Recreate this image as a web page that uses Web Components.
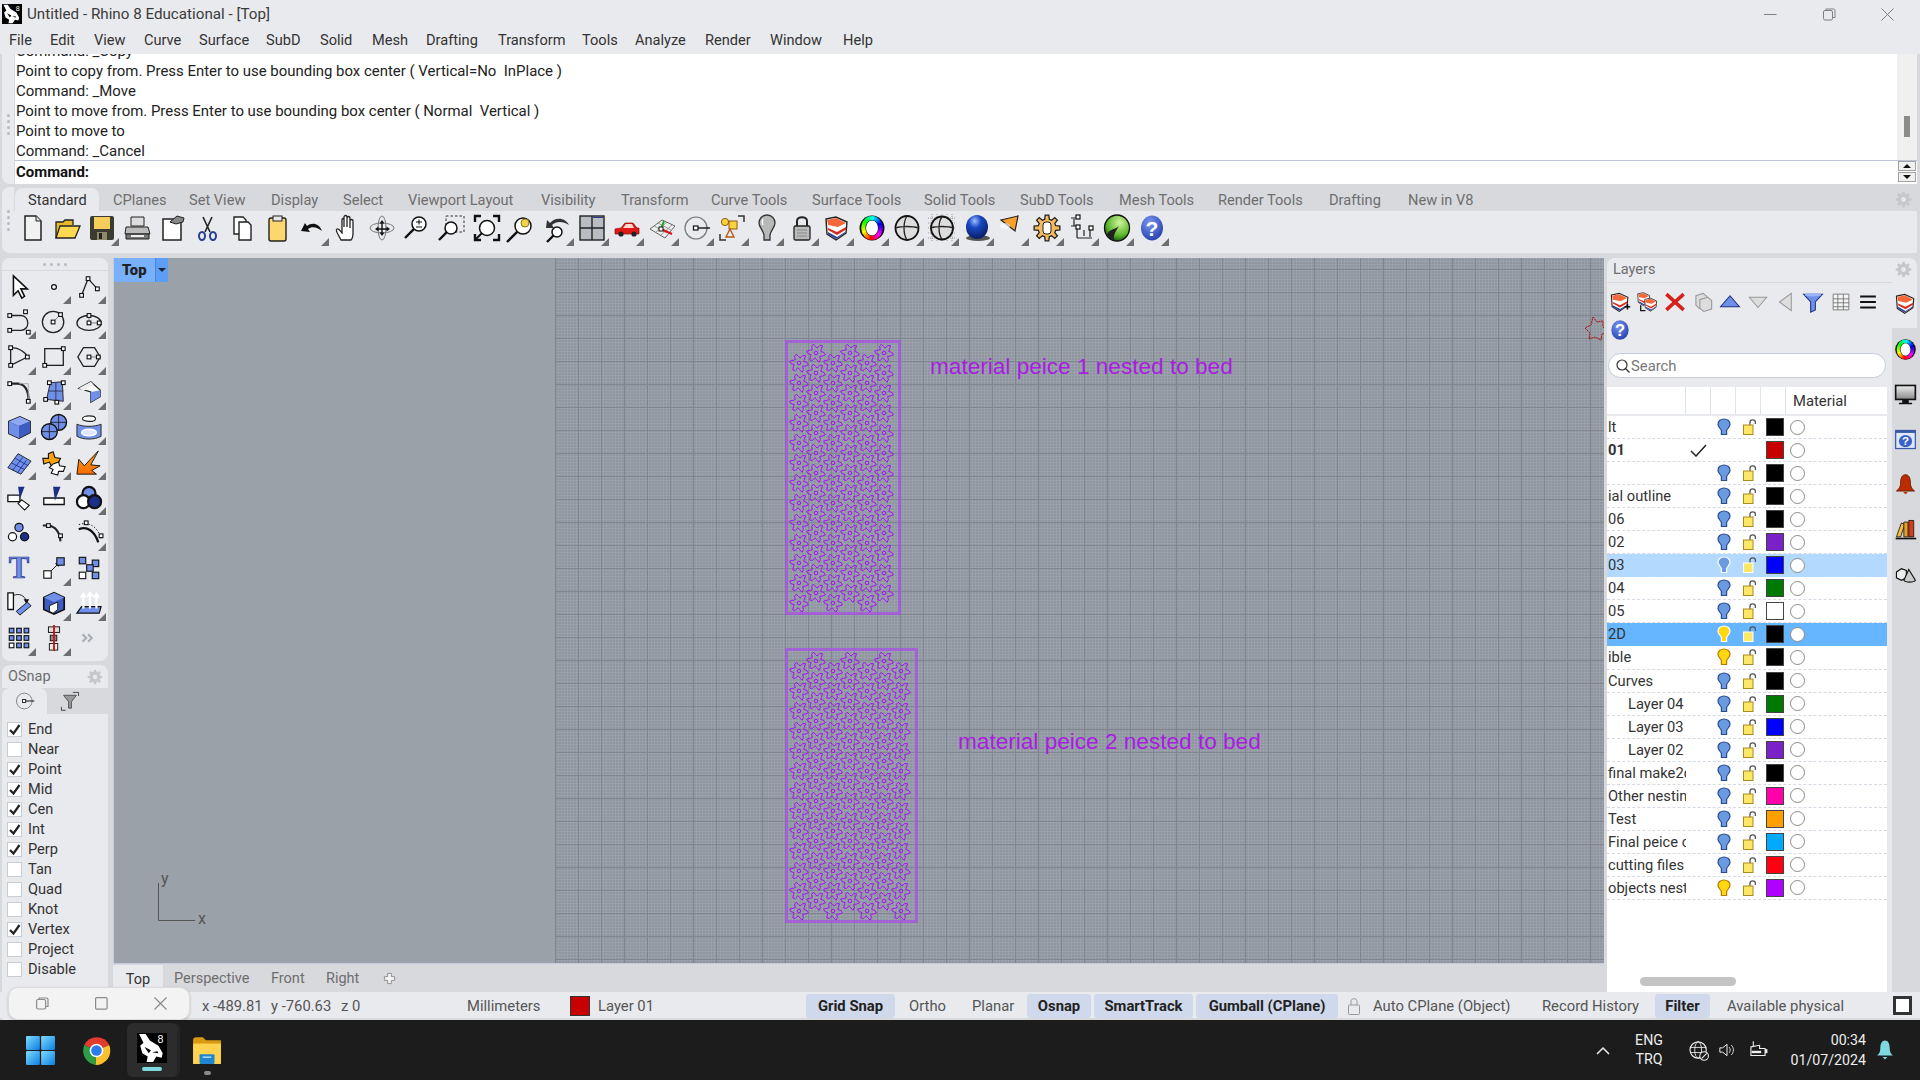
<!DOCTYPE html>
<html>
<head>
<meta charset="utf-8">
<title>Rhino 8</title>
<style>
  html, body { margin: 0; padding: 0; width: 1920px; height: 1080px; overflow: hidden; background: #d8d9dd; }
  body { font-family: Roboto, "Liberation Sans", sans-serif; font-size: 14.5px; color: #333; }
</style>
</head>
<body>
<rh-app>
  <rh-titlebar slot="top">Untitled - Rhino 8 Educational - [Top]</rh-titlebar>
  <rh-menubar slot="top"></rh-menubar>
  <rh-command slot="top"></rh-command>
  <rh-toolbar slot="top"></rh-toolbar>
  <rh-leftcol slot="left"></rh-leftcol>
  <rh-viewport slot="center"></rh-viewport>
  <rh-layers slot="right"></rh-layers>
  <rh-statusbar slot="bottom"></rh-statusbar>
  <rh-taskbar slot="bottom"></rh-taskbar>
  <rh-snappopup slot="overlay"></rh-snappopup>
</rh-app>

<script>
// little svg helpers ---------------------------------------------------------
function gearPath(cx, cy, R, r, n) {
  let d = '';
  for (let i = 0; i < n; i++) {
    const a = i * 2 * Math.PI / n, w = Math.PI / n * 0.5;
    const pts = [[r, a - w * 1.3], [R, a - w * 0.7], [R, a + w * 0.7], [r, a + w * 1.3]];
    pts.forEach(([rad, t], j) => {
      d += ((i === 0 && j === 0) ? 'M' : 'L') + (cx + rad * Math.cos(t)).toFixed(1) + ' ' + (cy + rad * Math.sin(t)).toFixed(1);
    });
  }
  return d + 'Z';
}
function wheel() {
  let s = '<circle cx="14" cy="14" r="12.5" fill="#111"/>';
  for (let i = 0; i < 24; i++) {
    const a = i * 15 * Math.PI / 180, b = (i + 1.2) * 15 * Math.PI / 180;
    const p = t => (14 + 8.6 * Math.cos(t)).toFixed(2) + ' ' + (14 + 10 * Math.sin(t)).toFixed(2);
    s += `<path d="M${p(a)}A8.6 10 0 0 1 ${p(b)}" fill="none" stroke="hsl(${i * 15 - 90},100%,50%)" stroke-width="4"/>`;
  }
  return s + '<ellipse cx="14" cy="14" rx="6" ry="7.6" fill="#fff"/>';
}
const glass = (x, y, r = 5.5) => `<circle cx="${x}" cy="${y}" r="${r}" fill="#fff" stroke="#111" stroke-width="1.5"/><path d="M${x - r * 0.7} ${y + r * 0.7}L${x - r * 2} ${y + r * 2}" stroke="#111" stroke-width="2.4"/>`;
const sq = (x, y, s = 4, f = '#fff') => `<rect x="${x - s / 2}" y="${y - s / 2}" width="${s}" height="${s}" fill="${f}" stroke="#111" stroke-width="1.2"/>`;
const ln = 'fill="none" stroke="#222" stroke-width="1.4"';
const bl = '#6f8fe8', dk = '#1c2f86';
const help = '<defs><radialGradient id="h" cx=".4" cy=".3" r=".8"><stop offset="0" stop-color="#7b95f0"/><stop offset="1" stop-color="#1d3ba8"/></radialGradient></defs><ellipse cx="14" cy="14" rx="11" ry="12.5" fill="url(#h)"/><text x="14" y="22" text-anchor="middle" font-family="Liberation Sans" font-weight="700" font-size="21" fill="#fff">?</text>';
const shield = '<path d="M3 5L13 3L24 8L23 19L13 26L4 20Z" fill="#fff" stroke="#222" stroke-width="1.4"/><path d="M4 6L13 4L23 9L15 13L5 11Z" fill="#f5683a"/><path d="M5 14L14 18L23 13V15.5L14 21L5 16Z" fill="#d92a1e"/><path d="M5 18L14 23L22 18V19L13 25L5 20Z" fill="#2a3f9a"/>';

const ICONS = {
  // main toolbar
  new: '<path d="M7 2H18L23 7V26H7Z" fill="#f1f1f1" stroke="#222" stroke-width="1.5"/><path d="M18 2V7H23" fill="#ddd" stroke="#222"/>',
  open: '<path d="M3 24V8H10L12 6H20V11" fill="#e8b92c" stroke="#222" stroke-width="1.3"/><path d="M3 24L7 12H27L22 24Z" fill="#ffd94f" stroke="#222" stroke-width="1.3"/>',
  save: '<rect x="2" y="2" width="24" height="24" rx="2" fill="#3b3b32"/><rect x="6" y="3" width="16" height="12" fill="#f4cd5a"/><rect x="9" y="18" width="10" height="8" fill="#8f8a68"/><rect x="11" y="19" width="3" height="6" fill="#222"/>',
  print: '<path d="M8 3H21V12H8Z" fill="#ddd" stroke="#222"/><path d="M3 13H25L27 20H2Z" fill="#bbb" stroke="#222"/><path d="M3 20H26V25H3Z" fill="#777" stroke="#222"/><path d="M8 21H21V23H8Z" fill="#eee"/>',
  page: '<path d="M5 5H17L23 9V26H5Z" fill="#fff" stroke="#222" stroke-width="1.5"/><path d="M12 8L19 2L26 4L25 8L18 10Z" fill="#888" stroke="#222"/>',
  cut: '<path d="M10 3L17 18M19 3L12 18" stroke="#222" stroke-width="1.6"/><ellipse cx="9" cy="22" rx="3" ry="4" fill="none" stroke="#24408e" stroke-width="2"/><ellipse cx="20" cy="22" rx="3" ry="4" fill="none" stroke="#24408e" stroke-width="2"/>',
  copy: '<path d="M6 3H15L18 6V20H6Z" fill="#fff" stroke="#222" stroke-width="1.4"/><path d="M11 8H20L23 11V26H11Z" fill="#fff" stroke="#222" stroke-width="1.4"/>',
  paste: '<rect x="6" y="4" width="17" height="23" rx="2" fill="#fcd66f" stroke="#222" stroke-width="1.4"/><rect x="10" y="2" width="9" height="5" fill="#e8e8e8" stroke="#222"/>',
  undo: '<path d="M24 17C21 9 14 8 9 12L7 9L3 17L12 18L10 15C14 12 19 13 24 17Z" fill="#111"/>',
  hand: '<path d="M8 26C5 20 2 16 4 15C6 14 8 18 9 19V6C9 4 11 4 11 6V13V3C11 1 14 1 14 3V13V4C14 2 17 2 17 4V14V7C17 5 20 5 20 7V19C20 23 19 25 18 26Z" fill="#fff" stroke="#222" stroke-width="1.3"/>',
  rotate: '<ellipse cx="14" cy="14" rx="12" ry="5" fill="none" stroke="#777"/><ellipse cx="14" cy="14" rx="4" ry="12" fill="none" stroke="#777"/><path d="M14 8V20M9 15H20" stroke="#111" stroke-width="1.4"/><path d="M14 6L11.5 9.5H16.5ZM14 22L11.5 18.5H16.5ZM7 15L10.5 12.5V17.5ZM22 15L18.5 12.5V17.5Z" fill="#111"/>',
  zoomio: glass(16, 10, 7) + '<path d="M13 8H19M16 5.5V10.5M13 13H19" stroke="#111" stroke-width="1.1"/>',
  zoomwin: '<rect x="8" y="2" width="18" height="16" fill="none" stroke="#333" stroke-dasharray="2.5 2"/>' + glass(13, 14, 6),
  zoomext: glass(14, 14, 7.5).replace(/<path.*$/, '') + '<path d="M2 8V2H8M20 2H26V8M26 20V26H20M8 26H2V20" fill="none" stroke="#111" stroke-width="2.4"/><path d="M3 25L9 19" stroke="#111" stroke-width="2"/>',
  zoomsel: glass(15, 12, 8) + '<circle cx="17" cy="9" r="4" fill="#f3d24a" stroke="#8f7a1a"/>',
  undoview: glass(14, 18, 5) + '<path d="M26 11C22 3 12 3 7 9L4 6L3 14L11 14L9 11C13 7 20 7 26 11Z" fill="#333"/>',
  views: '<rect x="2" y="2" width="24" height="24" fill="#b9bcc2" stroke="#222" stroke-width="1.4"/><path d="M14 2V26M2 14H26" stroke="#222" stroke-width="1.4"/><path d="M15 3H25V4H15Z" fill="#2a3f9a"/>',
  car: '<path d="M2 20V15L8 14L12 9H20L24 14H26V20Z" fill="#e01818" stroke="#8c1010" stroke-width=".7"/><path d="M13 10H19L21 14H10Z" fill="#ffd8d0"/><circle cx="8" cy="20" r="2.6" fill="#222"/><circle cx="21" cy="20" r="2.6" fill="#222"/>',
  cplane: '<path d="M2 15L14 6L27 12L17 24Z" fill="#eee" stroke="#666"/><path d="M6 12L19 19M10 9L23 16M8 18L19 8M13 21L24 11" stroke="#777" stroke-width=".7"/><path d="M13 15L24 20" stroke="#d11" stroke-width="2"/><path d="M13 15L16 7" stroke="#1a1" stroke-width="2"/><rect x="11" y="13" width="4" height="4" fill="#fff" stroke="#111"/>',
  osnap: '<ellipse cx="13" cy="14" rx="11" ry="11" fill="none" stroke="#777" stroke-width="1.2"/><rect x="10.5" y="12" width="4.5" height="4" fill="#fff" stroke="#111" stroke-width="1.2"/><path d="M15 14H27" stroke="#111" stroke-width="1.4"/>',
  track: '<path d="M20 2H26V8M2 20V26H8" fill="none" stroke="#333" stroke-width="1.5"/><circle cx="7" cy="8" r="3.6" fill="#fcd23c" stroke="#8d5a10"/><rect x="11" y="7" width="8" height="8" fill="#fcd23c" stroke="#8d5a10"/><path d="M8 23L12 15L16 23Z" fill="none" stroke="#b35a1a" stroke-width="1.4"/>',
  bulb: '<path d="M14 1C19 1 22 5 22 9C22 13 18 16 17 21V26H11V21C10 16 6 13 6 9C6 5 9 1 14 1Z" fill="#b8b8b8" stroke="#333" stroke-width="1.3"/><path d="M10 5C9 7 9 9 10 11" stroke="#fff" fill="none" stroke-width="1.5"/>',
  lock: '<path d="M9 12V7C9 2 19 2 19 7V12" fill="none" stroke="#222" stroke-width="2"/><rect x="6" y="12" width="16" height="14" rx="1.5" fill="#bbb" stroke="#222" stroke-width="1.3"/><path d="M9 16H19M9 19H19M9 22H19" stroke="#888"/>',
  layers: shield,
  wheel: wheel(),
  wire: '<ellipse cx="14" cy="14" rx="11.5" ry="12" fill="#ddd" stroke="#111" stroke-width="1.8"/><path d="M14 2C10 8 10 20 14 26M3 14C8 12 20 12 25 14" fill="none" stroke="#222" stroke-width="1.3"/>',
  wiregrid: '<path d="M0 4H28M0 9H28M0 14H28M0 19H28M0 24H28M4 0V28M9 0V28M14 0V28M19 0V28M24 0V28" stroke="#888" stroke-width=".8" stroke-dasharray="1 1"/><ellipse cx="14" cy="14" rx="11" ry="11.5" fill="#ddd" stroke="#111" stroke-width="1.8"/><path d="M14 3C10 8 10 20 14 25M3 14C8 12 20 12 25 14" fill="none" stroke="#222" stroke-width="1.3"/>',
  render: '<defs><radialGradient id="r" cx=".4" cy=".25" r=".8"><stop offset="0" stop-color="#9fc0ff"/><stop offset=".35" stop-color="#1a49c4"/><stop offset="1" stop-color="#061a5c"/></radialGradient></defs><ellipse cx="15" cy="24" rx="12" ry="3" fill="#555"/><ellipse cx="14" cy="13" rx="11" ry="12" fill="url(#r)"/>',
  spot: '<path d="M3 6L20 2L17 17Z" fill="#f9a02c" stroke="#222" stroke-width="1.2"/><ellipse cx="7" cy="12" rx="5" ry="3" fill="#fff" opacity=".6"/>',
  gear: `<path d="${gearPath(14, 14, 13, 9, 8)}" fill="#f4bb5a" stroke="#222" stroke-width="1.3"/><rect x="10" y="8" width="8" height="12" rx="3" fill="#fff" stroke="#222"/>`,
  dims: '<path d="M3 4H9M6 5V12M3 12H9M9 13V24M9 24H24M16 22V16M22 16V23" stroke="#222" stroke-width="1.2" fill="none"/>' + sq(10, 3, 4) + sq(10, 13, 4) + sq(23, 14, 4),
  globe: '<defs><radialGradient id="g" cx=".6" cy=".3" r=".7"><stop offset="0" stop-color="#d0f59a"/><stop offset=".7" stop-color="#5cb52c"/><stop offset="1" stop-color="#1e5c12"/></radialGradient></defs><ellipse cx="14" cy="14" rx="12.5" ry="13" fill="url(#g)" stroke="#111" stroke-width="1.3"/><path d="M4 20C8 14 12 16 16 12C12 18 9 24 12 26C8 26 5 23 4 20Z" fill="#222"/>',
  help,
  // left tools
  arrow: '<path d="M8 2V23L13 18L17 26L20 24L16 16H23Z" fill="#fff" stroke="#111" stroke-width="1.7"/>',
  point: '<circle cx="14" cy="14" r="2.6" fill="#fff" stroke="#111" stroke-width="1.3"/>',
  polyline: `<path d="M6 23L13 5L23 16" ${ln}/>` + sq(6, 23) + sq(13, 5) + sq(23, 16),
  curve: `<path d="M4 7H16C26 7 26 23 16 23H4" ${ln}/>` + sq(4, 7) + sq(4, 23) + sq(21, 3) + sq(24, 25),
  circle: `<circle cx="13" cy="14" r="11.5" ${ln}/><path d="M13 14L20 7" stroke="#777"/>` + sq(13, 14) + sq(21, 6),
  ellipse: `<ellipse cx="14" cy="15" rx="13" ry="8" ${ln}/><path d="M14 15H25M14 15V7" stroke="#777"/>` + sq(14, 15) + sq(14, 7) + sq(25, 15),
  arc: `<path d="M5 4C15 4 22 10 23 14M5 4V23M5 23L23 14" ${ln}/>` + sq(5, 4) + sq(5, 23) + sq(23, 14),
  rect: `<rect x="4" y="5" width="20" height="18" ${ln}/>` + sq(4, 23) + sq(24, 5),
  polygon: `<path d="M8 4H20L26 14L20 24H8L2 14Z" ${ln}/><path d="M14 14H26" stroke="#777"/>` + sq(14, 14) + sq(24, 14),
  fillet: '<path d="M4 5H12C20 5 25 12 24 24" fill="none" stroke="#222" stroke-width="2.4"/><path d="M14 5H24V22" fill="none" stroke="#aaa"/>' + sq(4, 5) + sq(24, 24),
  patch: `<path d="M6 22L10 4L23 3L24 24Z" fill="${bl}" stroke="#222"/><path d="M8 13L24 13M16 4L16 24" stroke="#223" stroke-width=".8"/>` + sq(5, 22) + sq(9, 4) + sq(24, 4) + sq(17, 25),
  sweep: `<path d="M3 10L16 3L26 12V19L16 25V14Z" fill="#fff" stroke="#222" stroke-width="1.3"/><path d="M3 10L16 3L19 6L8 13Z" fill="#eee"/><path d="M16 14L26 12V19L16 25Z" fill="${bl}"/>`,
  box: `<path d="M3 8L15 3L26 8V20L14 26L3 21Z" fill="#446" stroke="#111" stroke-width="1.5"/><path d="M3 8L15 3L26 8L14 13Z" fill="#8fa8f5"/><path d="M3 8L14 13V26L3 21Z" fill="${bl}"/><path d="M14 13L26 8V20L14 26Z" fill="#3f5cc0"/>`,
  spheres: `<g><circle cx="19" cy="9" r="8.5" fill="${bl}" stroke="#111" stroke-width="1.5"/><path d="M11 9H27M19 1V17" stroke="#223"/><circle cx="9" cy="19" r="8.5" fill="${bl}" stroke="#111" stroke-width="1.5"/><path d="M1 19H17M9 11V27" stroke="#223"/></g>`,
  cyl: `<ellipse cx="14" cy="5" rx="7" ry="3" fill="#fff" stroke="#222" stroke-width="1.2"/><path d="M1 11C8 14 20 14 27 11V24C20 28 8 28 1 24Z" fill="${bl}" stroke="#222"/><ellipse cx="14" cy="20" rx="8" ry="3.6" fill="#dfe6ff" stroke="#fff" stroke-width="1.5"/>`,
  mesh: `<path d="M2 19L13 4L27 12L16 26Z" fill="${bl}" stroke="#222"/><path d="M6 14L20 21M10 9L24 17M7 22L18 8M12 25L22 11" stroke="#1c2f86" stroke-width=".9"/>`,
  puzzle: '<path d="M2 9L8 9L8 4L13 2L15 8L21 9L18 15L11 17L9 13L3 15Z" fill="#f5a40f" stroke="#111" stroke-width="1.2"/><path d="M13 15L19 13L20 17L26 18L24 23L19 23L18 27L11 25L13 21L9 19Z" fill="#fff" stroke="#111" stroke-width="1.2"/>',
  explode: '<defs><linearGradient id="e" x1="0" y1="0" x2="0" y2="1"><stop offset="0" stop-color="#f8a51a"/><stop offset="1" stop-color="#fb6a00"/></linearGradient></defs><path d="M1 26L3 10L9 17L24 1L16 16L26 17L17 22L22 26Z" fill="url(#e)" stroke="#111" stroke-width="1"/>',
  trim: `<path d="M2 11H15V18H2Z" fill="#fff" stroke="#111" stroke-width="1.4"/><path d="M13 2H20L15 15Z" fill="${dk}"/><path d="M17 16L25 22L20 27L13 20Z" fill="#fff" stroke="#111" stroke-width="1.2"/>`,
  split: `<path d="M3 14H25V21H3Z" fill="#fff" stroke="#111" stroke-width="1.4"/><path d="M13 2H21L15 17Z" fill="${dk}"/>`,
  bool: `<circle cx="14" cy="9" r="7" fill="${bl}" stroke="#111" stroke-width="2.4"/><circle cx="8" cy="18" r="7" fill="#fff" stroke="#111" stroke-width="2.4"/><circle cx="20" cy="18" r="7" fill="${dk}" stroke="#111" stroke-width="2.4"/>`,
  group: `<circle cx="14" cy="8" r="4.4" fill="${bl}" stroke="#111" stroke-width="1.3"/><circle cx="7" cy="18" r="4.4" fill="#fff" stroke="#111" stroke-width="1.3"/><circle cx="20" cy="18" r="4.4" fill="${dk}" stroke="#111" stroke-width="1.3"/>`,
  blend: '<path d="M2 6H8C15 7 20 13 21 23" fill="none" stroke="#222" stroke-width="2.2"/>' + sq(8, 6) + sq(21, 17),
  offset: '<path d="M3 10C12 6 20 12 24 24" fill="none" stroke="#111" stroke-width="2.4"/><path d="M3 5C14 1 24 8 27 20" fill="none" stroke="#111" stroke-dasharray="1.5 2"/>' + sq(11, 3) + sq(27, 17),
  textT: `<text x="14" y="25" text-anchor="middle" font-family="Liberation Serif" font-weight="700" font-size="33" fill="${bl}" stroke="${dk}" stroke-width=".8">T</text>`,
  move: '<path d="M11 17L20 8" stroke="#111"/><path d="M20 8L15 9L19 13Z" fill="#111"/>' + sq(7, 21, 8) + sq(21, 7, 8, bl),
  copyobj: sq(7, 6, 7, bl) + sq(21, 9, 7, bl) + sq(15, 14, 7, bl) + sq(7, 22, 7) + sq(21, 22, 7, bl),
  rotobj: `<path d="M2 3H8V21H2Z" fill="#fff" stroke="#111" stroke-width="1.4"/><path d="M8 6C14 3 20 6 22 12" fill="none" stroke="#111"/><path d="M22 15L19 10H25Z" fill="#111"/><path d="M11 23L23 13L27 17L15 27Z" fill="${bl}" stroke="#111"/>`,
  block: `<path d="M3 8L14 3L25 8V21L14 26L3 21Z" fill="#3f5cc0" stroke="#111" stroke-width="1.8"/><path d="M3 8L14 3L25 8L14 13Z" fill="${bl}"/><path d="M9 17L18 13V21L13 25L9 23Z" fill="#fff" stroke="#111"/>`,
  extrude: `<path d="M1 25L6 18H27L25 25Z" fill="${bl}" stroke="#111" stroke-width="1.3"/><path d="M8 20V7M15 20V5M22 20V7" stroke="#fff" stroke-width="2.4"/><path d="M8 2L4 8H12ZM15 1L11 7H19ZM22 2L18 8H26Z" fill="#fff"/>`,
  array: [6, 14, 22].map(y => [6, 14, 22].map(x => sq(x, y, 5, y === 22 && x === 6 ? '#fff' : bl)).join('')).join(''),
  mirror: '<rect x="8" y="2" width="12" height="6" fill="#ddd" stroke="#111"/><rect x="10" y="11" width="7" height="6" fill="#888" stroke="#111"/><rect x="9" y="20" width="9" height="7" fill="#eee" stroke="#111"/><path d="M14 0V28" stroke="#d01010" stroke-width="2"/>',
  more: '<path d="M7 10L11 14L7 18M13 10L17 14L13 18" fill="none" stroke="#a9adb6" stroke-width="2.2"/>',
  // layer panel
  newlayer: shield + '<path d="M20 20H27M23.5 16.5V23.5" stroke="#111" stroke-width="2"/>',
  newsub: '<g transform="scale(.72)">' + shield + '</g><g transform="translate(9 7) scale(.72)">' + shield + '</g><path d="M6 18V25H12" fill="none" stroke="#111" stroke-width="1.6"/>',
  del: '<path d="M3 4L25 24M25 4L3 24" stroke="#d5201c" stroke-width="4.4"/>',
  dupe: '<path d="M5 6L14 3L19 7V19L9 22L5 18Z" fill="#ddd" stroke="#999" stroke-width="1.4"/><path d="M10 11L20 8L25 12V23L15 26L10 22Z" fill="#ddd" stroke="#999" stroke-width="1.4"/>',
  up: `<path d="M14 6L26 20H2Z" fill="${bl}" stroke="${dk}" stroke-width="1.3"/>`,
  down: '<path d="M3 8H25L14 21Z" fill="#ddd" stroke="#999" stroke-width="1.3"/>',
  left: '<path d="M22 3V25L7 14Z" fill="#ddd" stroke="#999" stroke-width="1.3"/>',
  funnel: `<path d="M2 4H26L17 14V24L11 27V14Z" fill="${bl}" stroke="${dk}" stroke-width="1.3"/><ellipse cx="14" cy="5" rx="11" ry="2" fill="#9db2f5"/>`,
  table: '<path d="M4 4H24V24H4ZM4 10H24M4 15H24M4 20H24M10 4V24M17 4V24" fill="#f4f4f4" stroke="#666"/>',
  menu: '<path d="M4 7H24M4 14H24M4 21H24" stroke="#111" stroke-width="2.8"/>',
  monitor: '<defs><linearGradient id="m" x1="0" y1="0" x2="0" y2="1"><stop offset="0" stop-color="#eee"/><stop offset="1" stop-color="#888"/></linearGradient></defs><rect x="2" y="3" width="24" height="17" fill="url(#m)" stroke="#111" stroke-width="2"/><path d="M10 20H18V24H22V26H6V24H10Z" fill="#111"/>',
  helpwin: '<rect x="2" y="3" width="24" height="22" fill="#dfe7fb" stroke="#3a5aa8" stroke-width="1.5"/><rect x="2" y="3" width="24" height="3" fill="#3a5aa8"/><ellipse cx="14" cy="16" rx="8" ry="7.5" fill="#3a62cc"/><text x="14" y="21" text-anchor="middle" font-family="Liberation Sans" font-weight="700" font-size="14" fill="#fff">?</text>',
  bell: '<path d="M14 2C18 2 20 6 20 12C20 18 23 20 25 22H3C5 20 8 18 8 12C8 6 10 2 14 2Z" fill="#bd2c00" stroke="#5c1a00"/><path d="M11 23H17L14 26Z" fill="#bd2c00"/>',
  books: '<path d="M2 25H27" stroke="#111" stroke-width="2"/><path d="M3 23L9 6L13 8L8 23Z" fill="#f5c33a" stroke="#111"/><path d="M12 23V5H17V23Z" fill="#e8a02a" stroke="#111"/><path d="M18 23V3H24V23Z" fill="#d83a1a" stroke="#111"/>',
  shapes: '<path d="M3 11L9 7L15 9V18L9 21L3 18Z" fill="#eee" stroke="#111" stroke-width="1.4"/><path d="M18 8L26 21C24 24 14 24 12 21Z" fill="#ccc" stroke="#111" stroke-width="1.4"/>',
  tbfilter: '<path d="M5 6H23L16 15V24H12V15Z" fill="#999" stroke="#333"/><path d="M18 2H26V7M2 22V27H8" fill="none" stroke="#333" stroke-width="1.2"/>',
  plus: '<path d="M10 3H18V10H25V18H18V25H10V18H3V10H10Z" fill="#f4f4f4" stroke="#8b8b8b" stroke-width="2"/>',
  // taskbar
  win: '<defs><linearGradient id="w" x1="0" y1="0" x2="1" y2="1"><stop offset="0" stop-color="#7fdcff"/><stop offset="1" stop-color="#0b7de0"/></linearGradient></defs><g fill="url(#w)"><rect x="0" y="0" width="13.4" height="13.4" rx="1"/><rect x="14.6" y="0" width="13.4" height="13.4" rx="1"/><rect x="0" y="14.6" width="13.4" height="13.4" rx="1"/><rect x="14.6" y="14.6" width="13.4" height="13.4" rx="1"/></g>',
  chrome: '<path d="M14 14L3 9A12.5 12.5 0 0 1 25.5 9Z" fill="#e33b2e"/><path d="M14 14L25.5 9A13 13 0 0 1 13 27Z" fill="#fbc02d"/><path d="M14 14L13 27A13 13 0 0 1 3 9Z" fill="#2e9e44"/><circle cx="14" cy="14" r="6.2" fill="#fff"/><circle cx="14" cy="14" r="4.8" fill="#2b7de9"/>',
  rhino: '<rect width="28" height="28" fill="#000"/><path d="M2 1H8L12 7L20 12L24 19L23 23L18 22L15 27H9L10 22L5 19L3 12L6 9Z" fill="#fff"/><path d="M7 13L13 16L11 19ZM14 18L19 17L20 19Z" fill="#000"/><text x="22" y="9.5" text-anchor="middle" font-family="Liberation Sans" font-size="10" fill="#fff">8</text>',
  folder: '<path d="M1 5C1 3 2 2 4 2H10L13 5H27V27H1Z" fill="#d99a12"/><path d="M1 8H27V27H1Z" fill="#fdd34f"/><rect x="7" y="18" width="14" height="9" rx="1" fill="#1f86d1"/><rect x="10" y="20" width="8" height="1.4" fill="#a8ddff"/>',
  globeoff: '<circle cx="13" cy="14" r="9.5" fill="none" stroke="#eee" stroke-width="1.3"/><ellipse cx="13" cy="14" rx="4" ry="9.5" fill="none" stroke="#eee"/><path d="M4 11H22M4 17H22" stroke="#eee"/><circle cx="20" cy="21" r="5" fill="#1c1c1c" stroke="#eee" stroke-width="1.2"/><path d="M17 24L23 18" stroke="#eee" stroke-width="1.2"/>',
  speaker: '<path d="M4 11H8L14 6V22L8 17H4Z" fill="none" stroke="#eee" stroke-width="1.4"/><path d="M17 10C19 12 19 16 17 18M20 7C24 11 24 17 20 21" fill="none" stroke="#eee" stroke-width="1.2"/>',
  battery: '<path d="M5 10L16 8V12H23V21H5Z" fill="#1c1c1c" stroke="#eee" stroke-width="1.4"/><path d="M23 13H26V18H23Z" fill="#eee"/><path d="M8 3V10" stroke="#eee" stroke-width="1.4"/><path d="M6 15H18V18H6Z" fill="#eee"/>',
  notify: '<path d="M14 2C18 2 20 6 20 12C20 17 22 19 24 21H4C6 19 8 17 8 12C8 6 10 2 14 2Z" fill="#7fd8e0"/><path d="M11 23H17L14 26Z" fill="#7fd8e0"/>',
  cog: `<path d="${gearPath(14, 14, 13, 9.5, 8)}" fill="#c6c7ca"/><circle cx="14" cy="14" r="4" fill="#e9eaee"/>`
};

// leaf elements --------------------------------------------------------------
class RhIcon extends HTMLElement {
  connectedCallback() {
    const size = this.getAttribute('size') || 28;
    const name = this.getAttribute('name');
    this.attachShadow({ mode: 'open' }).innerHTML = `
      <style>:host { display: block; width: ${size}px; height: ${size}px; flex: none; } svg { display: block; overflow: visible; }</style>
      <svg xmlns="http://www.w3.org/2000/svg" width="${size}" height="${size}" viewBox="0 0 28 28">${ICONS[name] || ''}</svg>`;
  }
}

class RhTool extends HTMLElement {
  connectedCallback() {
    const fly = this.hasAttribute('flyout');
    const size = this.getAttribute('size') || 28;
    this.attachShadow({ mode: 'open' }).innerHTML = `
      <style>
        :host { display: flex; width: 35px; height: 35px; align-items: center; justify-content: center; position: relative; }
        .fly { position: absolute; right: 0; bottom: 0; width: 0; height: 0; border-style: solid; border-width: 0 0 8px 8px; border-color: transparent transparent #6e6e6e transparent; }
      </style>
      <rh-icon name="${this.getAttribute('name')}" size="${size}"></rh-icon>
      ${fly ? '<span class="fly"></span>' : ''}`;
  }
}

class RhTitlebar extends HTMLElement {
  connectedCallback() {
    this.attachShadow({ mode: 'open' }).innerHTML = `
      <style>
        :host { display: flex; align-items: center; height: 28px; background: #e9eaee; }
        rh-icon { margin: 0 5px 0 2px; }
        .t { flex: 1; font-size: 15.2px; color: #3b3b3b; }
        svg { display: block; stroke: #7f7f7f; fill: none; }
        .w { width: 58.5px; display: flex; justify-content: center; }
      </style>
      <rh-icon name="rhino" size="20"></rh-icon>
      <span class="t"><slot></slot></span>
      <span class="w"><svg width="13" height="13"><path d="M0 6.5H12.5"/></svg></span>
      <span class="w"><svg width="13" height="13"><rect x=".5" y="2.5" width="9" height="9.5" rx="1.5"/><path d="M3 2.5V1H10.5C11.5 1 12 1.5 12 2.5V9.5H10"/></svg></span>
      <span class="w" style="margin-right:3px"><svg width="13" height="13"><path d="M.5 .5L12.5 12.5M12.5 .5L.5 12.5"/></svg></span>`;
  }
}

// row of labels, each one starting at a given x
function spread(items, end) {
  return items.map(([t, x], i) => {
    const next = i + 1 < items.length ? items[i + 1][1] : end;
    return `<span style="flex:none;width:${next - x}px">${t}</span>`;
  }).join('');
}

class RhMenubar extends HTMLElement {
  connectedCallback() {
    const m = [['File', 9], ['Edit', 50], ['View', 94], ['Curve', 144], ['Surface', 199], ['SubD', 266], ['Solid', 320], ['Mesh', 372], ['Drafting', 426], ['Transform', 498], ['Tools', 582], ['Analyze', 635], ['Render', 705], ['Window', 770], ['Help', 843]];
    this.attachShadow({ mode: 'open' }).innerHTML = `
      <style>:host { display: flex; align-items: center; height: 26px; box-sizing: border-box; padding: 0 0 2px 9px; background: #e9eaee; color: #333; font-size: 14.6px; }</style>
      ${spread(m, 900)}`;
  }
}

class RhCommand extends HTMLElement {
  connectedCallback() {
    const lines = ['Command: _Copy', 'Point to copy from. Press Enter to use bounding box center ( Vertical=No  InPlace )', 'Command: _Move', 'Point to move from. Press Enter to use bounding box center ( Normal  Vertical )', 'Point to move to', 'Command: _Cancel'];
    this.attachShadow({ mode: 'open' }).innerHTML = `
      <style>
        :host { display: flex; height: 130px; background: #d8d9dd; color: #222; font-size: 14.95px; }
        .rail { width: 12px; margin: 0 1px 0 2px; background: #e9eaee; border-radius: 0 0 0 8px; display: flex; flex-direction: column; align-items: center; justify-content: flex-end; gap: 3px; padding-bottom: 49px; box-sizing: border-box; }
        .rail i { width: 3px; height: 3px; border-radius: 50%; background: #b7bac2; }
        .main { flex: 1; display: flex; flex-direction: column; background: #fff; margin-right: 3px; }
        .hist { height: 106px; display: flex; overflow: hidden; border-bottom: 1px solid #c0c4d8; box-sizing: content-box; }
        .txt { flex: 1; overflow: hidden; padding-left: 1px; display: flex; flex-direction: column; justify-content: flex-end; white-space: pre; }
        .txt div { height: 20px; line-height: 20px; flex: none; position: relative; top: .5px; }
        .bar { width: 20px; background: #f0f0f0; display: flex; justify-content: center; padding-top: 62px; box-sizing: border-box; }
        .bar i { width: 6px; height: 21px; background: #8c8c8c; }
        .cmd { flex: 1; display: flex; align-items: center; font-weight: 700; padding-left: 1px; padding-bottom: 2px; color: #111; }
        .spin { margin-left: auto; width: 18px; margin-right: 1px; display: flex; flex-direction: column; gap: 1px; }
        .spin span { height: 10px; background: #f0f0f0; border: 1px solid #a0a0a0; box-sizing: border-box; display: flex; align-items: center; justify-content: center; }
        .spin i { width: 0; height: 0; border-left: 4px solid transparent; border-right: 4px solid transparent; }
      </style>
      <div class="rail"><i></i><i></i><i></i><i></i></div>
      <div class="main">
        <div class="hist">
          <div class="txt">${lines.map(l => `<div>${l}</div>`).join('')}</div>
          <div class="bar"><i></i></div>
        </div>
        <div class="cmd">Command:
          <div class="spin"><span><i style="border-bottom:4px solid #111"></i></span><span><i style="border-top:4px solid #111"></i></span></div>
        </div>
      </div>`;
  }
}

class RhToolbar extends HTMLElement {
  connectedCallback() {
    const tabs = [['CPlanes', 113], ['Set View', 189], ['Display', 271], ['Select', 343], ['Viewport Layout', 408], ['Visibility', 541], ['Transform', 621], ['Curve Tools', 711], ['Surface Tools', 812], ['Solid Tools', 924], ['SubD Tools', 1020], ['Mesh Tools', 1119], ['Render Tools', 1218], ['Drafting', 1329], ['New in V8', 1408]];
    const tools = ['new', 'open', 'save+', 'print', 'page', 'cut', 'copy', 'paste', 'undo+', 'hand', 'rotate', 'zoomio', 'zoomwin', 'zoomext', 'zoomsel', 'undoview+', 'views+', 'car+', 'cplane+', 'osnap+', 'track+', 'bulb+', 'lock+', 'layers+', 'wheel+', 'wire+', 'wiregrid+', 'render+', 'spot+', 'gear+', 'dims+', 'globe+', 'help+'];
    this.attachShadow({ mode: 'open' }).innerHTML = `
      <style>
        :host { display: flex; height: 74px; background: #d8d9dd; box-sizing: border-box; padding: 3px 3px 5px 2px; font-size: 14.6px; }
        .rail { width: 13px; background: #e9eaee; border-radius: 8px 0 0 8px; border-right: 1px solid #d8d9dd; box-sizing: border-box; display: flex; flex-direction: column; align-items: center; justify-content: center; gap: 3px; }
        .rail i { width: 3px; height: 3px; border-radius: 50%; background: #b7bac2; }
        .body { flex: 1; display: flex; flex-direction: column; }
        .tabs { height: 24px; display: flex; align-items: center; color: #6e6e6e; position: relative; }
        .tabs span { position: relative; top: 1px; }
        .act { flex: none; width: 98px; height: 24px; box-sizing: border-box; padding-left: 13px; display: flex; align-items: center; }
        .act b { font-weight: 400; color: #333; background: #e9eaee; border-radius: 8px 8px 0 0; height: 24px; width: 84px; margin-left: -13px; padding-left: 13px; box-sizing: border-box; display: flex; align-items: center; }
        .tools { height: 42px; background: #e9eaee; display: flex; align-items: center; box-sizing: border-box; padding: 0 0 8px 0; margin-left: -1px; }
        .gear { margin-left: auto; margin-right: 5px; }
      </style>
      <div class="rail"><i></i><i></i><i></i><i></i></div>
      <div class="body">
        <div class="tabs"><span class="act"><b>Standard</b></span>${spread(tabs, 1480)}<rh-icon class="gear" name="cog" size="17"></rh-icon></div>
        <div class="tools">${tools.map(t => `<rh-tool name="${t.replace('+', '')}" ${t.endsWith('+') ? 'flyout' : ''}></rh-tool>`).join('')}</div>
      </div>`;
  }
}

class RhOsnapItem extends HTMLElement {
  connectedCallback() {
    const on = this.hasAttribute('checked');
    this.attachShadow({ mode: 'open' }).innerHTML = `
      <style>
        :host { display: flex; align-items: center; height: 20px; padding-left: 5px; font-size: 14.6px; color: #333; }
        .b { width: 15px; height: 15px; background: #fff; border: 1px solid #c8ccd4; box-sizing: border-box; margin-right: 6px; }
        svg { display: block; }
      </style>
      <span class="b">${on ? '<svg width="13" height="13"><path d="M2 7L5.5 10.5L11.5 2" fill="none" stroke="#222" stroke-width="2.2"/></svg>' : ''}</span><slot></slot>`;
  }
}

class RhLeftcol extends HTMLElement {
  connectedCallback() {
    const rows = ['arrow point+ polyline+', 'curve+ circle+ ellipse+', 'arc+ rect+ polygon+', 'fillet+ patch+ sweep+', 'box+ spheres+ cyl+', 'mesh+ puzzle+ explode+', 'trim split bool+', 'group blend offset+', 'textT move+ copyobj', 'rotobj block+ extrude+', 'array+ mirror+ more'];
    const snaps = [['End', 1], ['Near', 0], ['Point', 1], ['Mid', 1], ['Cen', 1], ['Int', 1], ['Perp', 1], ['Tan', 0], ['Quad', 0], ['Knot', 0], ['Vertex', 1], ['Project', 0], ['Disable', 0]];
    this.attachShadow({ mode: 'open' }).innerHTML = `
      <style>
        :host { display: flex; flex-direction: column; width: 113px; height: 100%; padding-left: 2px; box-sizing: border-box; flex: none; }
        .panel { width: 106px; background: #e9eaee; }
        .tools { height: 403px; border-radius: 8px; }
        .grip { height: 11px; border-bottom: 1px solid #d8d9dd; display: flex; justify-content: center; align-items: center; gap: 4px; padding-top: 1px; }
        .grip i { width: 3px; height: 3px; border-radius: 50%; background: #b7bac2; }
        .grid { display: grid; grid-template-columns: repeat(3, 35px); grid-auto-rows: 35.2px; margin: -2px 0 0 -1px; }
        .grid rh-tool { height: 35.2px; }
        .osnap { margin-top: 4px; flex: 1; border-radius: 8px 8px 0 0; margin-bottom: -30px; display: flex; flex-direction: column; }
        .hd { height: 23px; display: flex; align-items: center; padding-left: 6px; color: #6e6e6e; font-size: 14.5px; }
        .hd rh-icon { margin-left: auto; margin-right: 5px; }
        .tb { height: 26px; background: #d8d9dd; display: flex; }
        .tb span { width: 45px; display: flex; justify-content: center; align-items: center; }
        .tb .on { background: #e9eaee; border-radius: 8px 8px 0 0; }
        .lst { padding-top: 5px; }
      </style>
      <div class="panel tools">
        <div class="grip"><i></i><i></i><i></i><i></i></div>
        <div class="grid">${rows.join(' ').split(' ').map(t => `<rh-tool size="26" name="${t.replace('+', '')}" ${t.endsWith('+') ? 'flyout' : ''}></rh-tool>`).join('')}</div>
      </div>
      <div class="panel osnap">
        <div class="hd">OSnap<rh-icon name="cog" size="16"></rh-icon></div>
        <div class="tb"><span class="on"><rh-icon name="osnap" size="20"></rh-icon></span><span><rh-icon name="tbfilter" size="20"></rh-icon></span></div>
        <div class="lst">${snaps.map(([t, c]) => `<rh-osnap-item ${c ? 'checked' : ''}>${t}</rh-osnap-item>`).join('')}</div>
      </div>`;
  }
}

class RhNest extends HTMLElement {
  // free-canvas drawing of the nested parts, placed inside the viewport
  connectedCallback() {
    const w = +this.getAttribute('w'), h = +this.getAttribute('h');
    const star = (() => {
      let d = '';
      const rs = [9.6, 7, 5, 8, 9.8, 6.4, 4.8, 8.4, 9.4, 6.8, 5.2, 8.2, 9.6, 6.2, 4.9, 8, 9.2, 6.6, 5, 8.3, 9.8, 6.3, 5, 8];
      rs.forEach((r, i) => {
        const t = i * Math.PI / 12 + 0.2;
        d += (i ? 'L' : 'M') + (r * Math.cos(t)).toFixed(1) + ' ' + (r * Math.sin(t)).toFixed(1);
      });
      return d + 'Z';
    })();
    let cells = '';
    for (let c = 0; 14 + c * 17 < w - 8; c++) {
      for (let y = c % 2 ? 13 : 23; y < h - 10; y += 20) {
        cells += `<use href="#s" x="${14 + c * 17}" y="${y}"/>`;
      }
    }
    this.attachShadow({ mode: 'open' }).innerHTML = `
      <style>:host { display: block; position: absolute; left: ${this.getAttribute('x')}px; top: ${this.getAttribute('y')}px; width: ${w}px; height: ${h}px; } svg { display: block; }</style>
      <svg width="${w}" height="${h}" xmlns="http://www.w3.org/2000/svg">
        <defs>
          <g id="s"><path d="${star}" fill="none" stroke="#a60ffa" stroke-width="1"/><circle r="1.8" fill="none" stroke="#a60ffa" stroke-width="1"/></g>
          <clipPath id="c"><rect x="3" y="3" width="${w - 6}" height="${h - 6}"/></clipPath>
        </defs>
        <g clip-path="url(#c)">${cells}</g>
        <rect x="1.5" y="1.5" width="${w - 3}" height="${h - 3}" fill="none" stroke="#a552e0" stroke-opacity=".8" stroke-width="3"/>
      </svg>`;
  }
}

class RhViewport extends HTMLElement {
  connectedCallback() {
    this.attachShadow({ mode: 'open' }).innerHTML = `
      <style>
        :host { display: flex; flex-direction: column; flex: none; width: 1491px; height: 100%; }
        .vp { height: 706px; display: flex; background: #9aa1a9; position: relative; overflow: hidden; border-left: 1px solid #c5cbdc; border-bottom: 1px solid #c5cbdc; box-sizing: border-box; }
        .spacer { width: 441px; flex: none; }
        .grid { flex: 1; background-color: #8f96a0;
          background-image: linear-gradient(#7f868f 1px, transparent 1px), linear-gradient(90deg, #7f868f 1px, transparent 1px),
            linear-gradient(rgba(165,172,180,.45) 1px, transparent 1px), linear-gradient(90deg, rgba(165,172,180,.45) 1px, transparent 1px);
          background-size: 23px 23px, 23px 23px, 3px 3px, 3px 3px;
          background-position: 0 11px, 0 0, 0 0, 0 0; }
        .badge { position: absolute; left: 0; top: 0; height: 24px; display: flex; align-items: center; background: #78b0fa; color: #222; font-weight: 700; font-size: 14.8px; }
        .badge b { padding: 0 9px 0 8px; }
        .badge i { width: 12px; height: 24px; background: #5c9df5; border-left: 1px solid #4f86d4; display: flex; align-items: center; justify-content: center; }
        .badge i::after { content: ''; border-left: 4px solid transparent; border-right: 4px solid transparent; border-top: 4px solid #223; }
        .lbl { position: absolute; color: #a81de0; font-family: "Liberation Sans", sans-serif; font-size: 22.6px; white-space: nowrap; line-height: 26px; }
        .ax { position: absolute; left: 44px; top: 625px; color: #555; font-size: 16px; }
        .ax svg { display: block; }
        .ax span { position: absolute; }
        .star { position: absolute; right: -6px; top: 56px; }
        .tabs { height: 28px; display: flex; align-items: center; font-size: 14.5px; color: #6e6e6e; background: #d8d9dd; }
        .tabs .on { flex: none; width: 50px; height: 28px; box-sizing: border-box; background: #e9eaee; color: #333; display: flex; align-items: center; justify-content: center; margin-right: 11px; margin-top: 2px; }
      </style>
      <div class="vp">
        <div class="spacer"></div>
        <div class="grid"></div>
        <div class="badge"><b>Top</b><i></i></div>
        <rh-nest x="671" y="82" w="116" h="275"></rh-nest>
        <rh-nest x="671" y="390" w="133" h="275"></rh-nest>
        <div class="lbl" style="left:816px;top:96px">material peice 1 nested to bed</div>
        <div class="lbl" style="left:844px;top:471px">material peice 2 nested to bed</div>
        <div class="ax">
          <svg width="60" height="40"><path d="M0.5 0V37.5H37" fill="none" stroke="#555"/></svg>
          <span style="left:3px;top:-14px">y</span><span style="left:40px;top:26px">x</span>
        </div>
        <svg class="star" width="26" height="28"><path d="M9 3L13 8L19 7L19 13L24 18L18 20L17 26L11 23L5 25L6 19L1 14L7 11Z" fill="none" stroke="#b01010" stroke-width="1" stroke-dasharray="2 .6"/></svg>
      </div>
      <div class="tabs">
        <span class="on">Top</span>${spread([['Perspective', 173], ['Front', 270], ['Right', 325], ['', 382]], 396)}
        <rh-icon name="plus" size="13" style="margin-left:-14px"></rh-icon>
      </div>`;
  }
}

class RhLayerRow extends HTMLElement {
  connectedCallback() {
    const a = n => this.getAttribute(n);
    const state = a('sel');
    const bg = state === '2' ? '#66b5ff' : state === '1' ? '#b3d9ff' : '#fff';
    const bulbCol = a('bulb') === 'y' ? ['#ffd80f', '#b57a00'] : ['#6a9be0', '#2b4c8c'];
    const bulb = a('bulb') === 'n' ? '' : `<svg width="16" height="18" viewBox="0 0 16 18"><path d="M8 1C11.5 1 14 3.3 14 6.2C14 8.6 11.8 10 10.6 12.5V16.5H5.4V12.5C4.2 10 2 8.6 2 6.2C2 3.3 4.5 1 8 1Z" fill="${bulbCol[0]}" stroke="${state ? '#fff' : bulbCol[1]}" stroke-width="1.2"/></svg>`;
    const lock = a('bulb') === 'n' ? '' : `<svg width="16" height="18" viewBox="0 0 16 18"><path d="M9 7V4.2C9 1.2 14.4 1.2 14.4 4.2V6" fill="none" stroke="#555" stroke-width="1.3"/><rect x="2.5" y="7" width="9.5" height="9.5" fill="#fde766" stroke="${state ? '#fff' : '#a98a20'}" stroke-width="1"/></svg>`;
    this.attachShadow({ mode: 'open' }).innerHTML = `
      <style>
        :host { display: flex; height: 23.05px; background: ${bg}; box-sizing: border-box; border-bottom: 1px dashed ${state ? bg : '#d6dae4'}; align-items: center; font-size: 14.7px; color: #333; }
        .n { width: 79px; flex: none; overflow: hidden; white-space: nowrap; box-sizing: border-box; padding-left: ${a('in') || 1}px; ${a('bold') !== null ? 'font-weight:700;' : ''} }
        .c { width: 25px; flex: none; display: flex; align-items: center; justify-content: center; }
        .sw { width: 18px; height: 18px; box-sizing: border-box; border: 1.5px solid #444; background: ${a('col')}; margin-left: 3px; }
        .o { width: 15px; height: 15px; box-sizing: border-box; border-radius: 50%; border: 1.4px solid #8a8a8a; background: ${state ? '#fff' : 'transparent'}; margin-left: 4px; }
        svg { display: block; }
      </style>
      <span class="n"><slot></slot></span>
      <span class="c">${a('cur') !== null ? '<svg width="17" height="13"><path d="M1 7L6 12L16 1" fill="none" stroke="#222" stroke-width="1.5"/></svg>' : ''}</span>
      <span class="c">${bulb}</span><span class="c">${lock}</span>
      <span class="c"><span class="sw"></span></span><span class="o"></span>`;
  }
}

class RhLayers extends HTMLElement {
  connectedCallback() {
    const K = '#000', G = '#007a00', B = '#0000ff', P = '#7a22c8';
    const rows = [
      ['lt', K], ['01', '#c80000', 'bold cur bulb="n"'], ['', K], ['ial outline', K], ['06', K], ['02', P],
      ['03', B, 'sel="1"'], ['04', G], ['05', '#fff'], ['2D', K, 'sel="2" bulb="y"'], ['ible', K, 'bulb="y"'],
      ['Curves', K], ['Layer 04', G, 'in="21"'], ['Layer 03', B, 'in="21"'], ['Layer 02', P, 'in="21"'],
      ['final make2d', K], ['Other nesting', '#ff00aa'], ['Test', '#ffa000'], ['Final peice cut', '#00aaff'],
      ['cutting files', '#ff0010'], ['objects nesting', '#b000ff', 'bulb="y"']
    ];
    const tb = ['newlayer', 'newsub', 'del', 'dupe', 'up', 'down', 'left', 'funnel', 'table', 'menu'];
    const rail = ['wheel', 'monitor', 'helpwin', 'bell', 'books', 'shapes'];
    const seps = [79, 25, 25, 25, 25];
    this.attachShadow({ mode: 'open' }).innerHTML = `
      <style>
        :host { display: flex; flex: 1; margin-left: 3px; margin-right: 3px; height: 100%; }
        .p { flex: 1; display: flex; flex-direction: column; background: #e9eaee; border-radius: 8px 0 0 0; min-width: 0; }
        .hd { height: 25px; flex: none; display: flex; align-items: center; padding-left: 6px; padding-bottom: 2px; box-sizing: border-box; color: #6e6e6e; font-size: 14.5px; border-bottom: 1px solid #d8d9dd; }
        .tb { display: flex; flex-wrap: wrap; width: 280px; height: 70px; flex: none; padding-top: 5px; box-sizing: border-box; margin-left: -1px; align-content: flex-start; }
        .tb span { width: 27.6px; height: 28px; display: flex; align-items: center; justify-content: center; }
        .s { margin: 0 6px 9px 1px; height: 25px; flex: none; background: #fff; border: 1px solid #c5cbdb; border-radius: 13px; box-sizing: border-box; display: flex; align-items: center; padding-left: 6px; color: #777; font-size: 14.8px; gap: 0; }
        .t { flex: 1; background: #fff; margin-right: 5px; display: flex; flex-direction: column; }
        .h { height: 29px; flex: none; display: flex; border-bottom: 2px solid #e9eaee; box-sizing: border-box; }
        .h span { box-sizing: border-box; border-right: 1px solid #dfe3ea; flex: none; }
        .h b { font-weight: 400; padding-left: 7px; display: flex; align-items: center; color: #333; font-size: 14.8px; }
        .sb { margin-top: auto; height: 15px; display: flex; }
        .sb i { display: block; margin: 0 0 6px 33px; width: 96px; height: 9px; border-radius: 5px; background: #c4c4c4; }
        .r { width: 25px; flex: none; display: flex; flex-direction: column; }
        .r div { height: 45px; display: flex; align-items: center; justify-content: center; flex: none; padding-left: 1px; }
        .r .first { background: #e9eaee; height: 70px; padding-top: 20px; box-sizing: border-box; border-radius: 0 8px 0 0; position: relative; }
        .r .first rh-icon.cog { position: absolute; top: 3px; left: 3px; }
        .r .rest { display: block; height: auto; flex: 1; background: #d8d9dd; border-radius: 10px 0 0 0; padding: 0; margin-top: -1px; }
        .r .rest div { height: 45px; }
      </style>
      <div class="p">
        <div class="hd">Layers</div>
        <div class="tb">${tb.map(n => `<span><rh-icon name="${n}" size="22"></rh-icon></span>`).join('')}<span><rh-icon name="help" size="22"></rh-icon></span></div>
        <div class="s"><svg width="16" height="16"><circle cx="7" cy="7" r="5" fill="none" stroke="#333" stroke-width="1.2"/><path d="M10.5 10.5L14.5 14.5" stroke="#333" stroke-width="1.2"/></svg>Search</div>
        <div class="t">
          <div class="h">${seps.map(w => `<span style="width:${w}px"></span>`).join('')}<b>Material</b></div>
          ${rows.map(([n, c, x]) => `<rh-layer-row col="${c}" ${x || ''}>${n}</rh-layer-row>`).join('')}
          <div class="sb"><i></i></div>
        </div>
      </div>
      <div class="r">
        <div class="first"><rh-icon class="cog" name="cog" size="17"></rh-icon><rh-icon name="layers" size="23"></rh-icon></div>
        <div class="rest">${rail.map(n => `<div><rh-icon name="${n}" size="23"></rh-icon></div>`).join('')}</div>
      </div>`;
  }
}

class RhStatusbar extends HTMLElement {
  connectedCallback() {
    const btn = (t, w) => `<span class="on" style="width:${w}px">${t}</span>`;
    const txt = (t, w) => `<span style="width:${w}px">${t}</span>`;
    this.attachShadow({ mode: 'open' }).innerHTML = `
      <style>
        :host { display: flex; height: 26px; align-items: center; background: #e9eaee; padding-left: 202px; font-size: 14.8px; color: #555; margin-bottom: 2px; box-sizing: border-box; padding-top: 1px; }
        span { flex: none; white-space: pre; display: block; }
        .on { height: 24px; line-height: 24px; background: #d0d9ec; border-radius: 3px; font-weight: 700; color: #222; text-align: center; }
        .sw { width: 20px; height: 20px; background: #c80000; border: 1.5px solid #333; box-sizing: border-box; margin-right: 8px; }
        svg { display: block; flex: none; }
      </style>
      ${txt('x -489.81', 69)}${txt('y -760.63', 70)}${txt('z 0', 126)}${txt('Millimeters', 103)}
      <span class="sw"></span>${txt('Layer 01', 208)}
      ${btn('Grid Snap', 89)}${txt('', 14)}${txt('Ortho', 63)}${txt('Planar', 55)}
      ${btn('Osnap', 64)}${txt('', 3)}${btn('SmartTrack', 99)}${txt('', 3)}${btn('Gumball (CPlane)', 142)}${txt('', 10)}
      <svg width="12" height="18" style="margin-right:13px"><path d="M3 8V4C3 1 9 1 9 4V8" fill="none" stroke="#999"/><rect x=".5" y="8" width="11" height="9.5" rx="1" fill="none" stroke="#999"/></svg>
      ${txt('Auto CPlane (Object)', 169)}${txt('Record History', 113)}${btn('Filter', 55)}${txt('', 17)}${txt('Available physical', 166)}
      <svg width="19" height="19"><rect x="1.5" y="1.5" width="16" height="16" fill="#fff" stroke="#333" stroke-width="3"/></svg>`;
  }
}

class RhTaskbar extends HTMLElement {
  connectedCallback() {
    this.attachShadow({ mode: 'open' }).innerHTML = `
      <style>
        :host { display: flex; height: 60px; background: #1c1c1c; align-items: center; color: #eee; font-size: 14.2px; position: relative; }
        .rh { margin-left: 15px; width: 50px; height: 54px; background: #2c2c2c; border-radius: 6px; display: flex; flex-direction: column; align-items: center; padding-top: 10px; box-sizing: border-box; box-shadow: 3px 0 0 #262626; }
        .rh i { width: 20px; height: 4px; margin-top: 4px; border-radius: 2px; background: #7fd8e0; }
        .ex { margin-left: 15px; width: 30px; display: flex; flex-direction: column; align-items: center; }
        .ex i { width: 7px; height: 4px; margin-top: 6px; margin-bottom: -10px; border-radius: 2px; background: #8a8a8a; }
        .l { text-align: center; line-height: 19px; width: 40px; }
        .c { text-align: right; line-height: 20px; width: 90px; }
      </style>
      <rh-icon name="win" size="29" style="margin-left:26px"></rh-icon>
      <rh-icon name="chrome" size="31" style="margin-left:26px"></rh-icon>
      <div class="rh"><rh-icon name="rhino" size="30"></rh-icon><i></i></div>
      <div class="ex"><rh-icon name="folder" size="30"></rh-icon><i></i></div>
      <svg width="14" height="9" style="margin-left:1374px;display:block"><path d="M1 8L7 2L13 8" fill="none" stroke="#eee" stroke-width="1.5"/></svg>
      <div class="l" style="margin-left:19px">ENG<br>TRQ</div>
      <rh-icon name="globeoff" size="24" style="margin-left:18px"></rh-icon>
      <rh-icon name="speaker" size="20" style="margin-left:6px"></rh-icon>
      <rh-icon name="battery" size="22" style="margin-left:10px"></rh-icon>
      <div class="c" style="margin-left:7px">00:34<br>01/07/2024</div>
      <rh-icon name="notify" size="22" style="margin-left:8px"></rh-icon>`;
  }
}

class RhSnappopup extends HTMLElement {
  connectedCallback() {
    this.attachShadow({ mode: 'open' }).innerHTML = `
      <style>
        :host { display: flex; position: absolute; left: 8px; top: 987px; width: 182px; height: 33px; background: #f3f3f3; border: 1px solid #dcdcdc; border-radius: 10px; box-sizing: border-box; align-items: center; padding-left: 27px; gap: 46px; box-shadow: 0 1px 3px rgba(0,0,0,.18); }
        svg { display: block; fill: none; stroke: #8a8a8a; stroke-width: 1.2; flex: none; }
      </style>
      <svg width="13" height="13"><rect x=".6" y="2.5" width="9" height="9.5" rx="1.5"/><path d="M3 2.5V1H10.5C11.5 1 12 1.5 12 2.5V9.5H10"/></svg>
      <svg width="13" height="13"><rect x=".6" y=".6" width="11.5" height="11.5" rx="1"/></svg>
      <svg width="13" height="13"><path d="M.5 .5L12.5 12.5M12.5 .5L.5 12.5"/></svg>`;
  }
}

class RhApp extends HTMLElement {
  connectedCallback() {
    this.attachShadow({ mode: 'open' }).innerHTML = `
      <style>
        :host { display: flex; flex-direction: column; width: 1920px; height: 1080px; position: relative; overflow: hidden; background: #d8d9dd; }
        .mid { display: flex; height: 734px; flex: none; }
        ::slotted([slot=left]), ::slotted([slot=center]), ::slotted([slot=right]) { height: 734px; }
        ::slotted([slot=bottom]) { position: relative; }
      </style>
      <slot name="top"></slot>
      <div class="mid"><slot name="left"></slot><slot name="center"></slot><slot name="right"></slot></div>
      <slot name="bottom"></slot>
      <slot name="overlay"></slot>`;
  }
}

[['rh-icon', RhIcon], ['rh-tool', RhTool], ['rh-titlebar', RhTitlebar], ['rh-menubar', RhMenubar], ['rh-command', RhCommand],
 ['rh-toolbar', RhToolbar], ['rh-osnap-item', RhOsnapItem], ['rh-leftcol', RhLeftcol], ['rh-nest', RhNest], ['rh-viewport', RhViewport],
 ['rh-layer-row', RhLayerRow], ['rh-layers', RhLayers], ['rh-statusbar', RhStatusbar], ['rh-taskbar', RhTaskbar],
 ['rh-snappopup', RhSnappopup], ['rh-app', RhApp]].forEach(([n, c]) => customElements.define(n, c));
</script>
</body>
</html>
